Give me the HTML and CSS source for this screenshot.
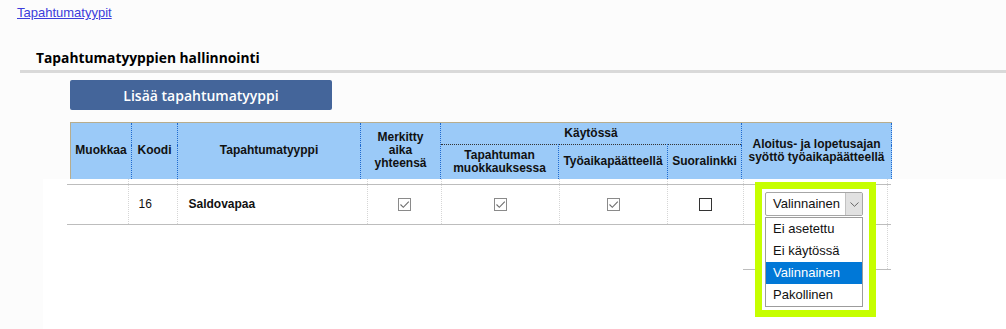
FILE: index.html
```html
<!DOCTYPE html>
<html lang="fi">
<head>
<meta charset="utf-8">
<title>Tapahtumatyypit</title>
<link rel="stylesheet" href="styles.css">
</head>
<body>
<div class="crumb"><a href="#">Tapahtumatyypit</a></div>
<h1 class="title">Tapahtumatyyppien hallinnointi</h1>
<div class="rule"></div>
<div class="toolbar"><button class="add" type="button">Lisää tapahtumatyyppi</button></div>

<table class="head">
  <colgroup>
    <col class="h1"><col class="h2"><col class="h3"><col class="h4"><col class="h5"><col class="h6"><col class="h7"><col class="h8">
  </colgroup>
  <tr class="r1">
    <th rowspan="2">Muokkaa</th>
    <th rowspan="2">Koodi</th>
    <th rowspan="2">Tapahtumatyyppi</th>
    <th rowspan="2">Merkitty<br>aika<br>yhteensä</th>
    <th colspan="3">Käytössä</th>
    <th rowspan="2">Aloitus- ja lopetusajan<br>syöttö työaikapäätteellä</th>
  </tr>
  <tr class="r2">
    <th class="sub">Tapahtuman<br>muokkauksessa</th>
    <th class="sub">Työaikapäätteellä</th>
    <th class="sub">Suoralinkki</th>
  </tr>
</table>

<div class="panel">
<table class="body">
  <colgroup>
    <col class="b1"><col class="b2"><col class="b3"><col class="b4"><col class="b5"><col class="b6"><col class="b7"><col class="b8"><col class="b9">
  </colgroup>
  <tr class="gap">
    <td></td><td></td><td></td><td></td><td></td><td></td><td></td><td></td><td class="end"></td>
  </tr>
  <tr class="row">
    <td></td>
    <td class="code">16</td>
    <td class="name">Saldovapaa</td>
    <td class="mid"><span class="cb on"><svg viewBox="0 0 11 11" width="11" height="11"><path d="M1.5 5.5 L4.3 8.3 L9.8 2.6" fill="none" stroke="#6d6d6d" stroke-width="1.1"/></svg></span></td>
    <td class="mid"><span class="cb on"><svg viewBox="0 0 11 11" width="11" height="11"><path d="M1.5 5.5 L4.3 8.3 L9.8 2.6" fill="none" stroke="#6d6d6d" stroke-width="1.1"/></svg></span></td>
    <td class="mid"><span class="cb on"><svg viewBox="0 0 11 11" width="11" height="11"><path d="M1.5 5.5 L4.3 8.3 L9.8 2.6" fill="none" stroke="#6d6d6d" stroke-width="1.1"/></svg></span></td>
    <td class="mid"><span class="cb"></span></td>
    <td class="mid"></td>
    <td class="end"></td>
  </tr>
  <tr class="after">
    <td></td><td></td><td></td><td></td><td></td><td></td><td></td><td class="last"></td><td class="end last"></td>
  </tr>
</table>
</div>

<div class="picker">
  <div class="select">
    <span class="value">Valinnainen</span>
    <span class="arrow"><svg viewBox="0 0 9 5" width="9" height="5"><path d="M0.5 0.5 L4.5 4.3 L8.5 0.5" fill="none" stroke="#666" stroke-width="1"/></svg></span>
  </div>
  <ul class="options">
    <li>Ei asetettu</li>
    <li>Ei käytössä</li>
    <li class="selected">Valinnainen</li>
    <li>Pakollinen</li>
  </ul>
</div>
</body>
</html>
```

FILE: styles.css
```css
html, body {
  margin: 0;
  padding: 0;
}
body {
  background: #fcfcfc;
  font-family: "Liberation Sans", Arial, sans-serif;
  color: #111;
  width: 1006px;
  height: 329px;
  overflow: hidden;
  position: relative;
}
.crumb {
  padding: 5px 0 0 17px;
  height: 17px;
  font-size: 13px;
  line-height: 16px;
}
.crumb a {
  color: #3d3ddb;
  text-decoration: underline;
}
.title {
  margin: 26px 0 0 36px;
  font-family: "Open Sans", sans-serif;
  font-size: 13.8px;
  font-weight: 700;
  line-height: 20px;
  height: 20px;
  color: #000;
}
.rule {
  margin: 2px 0 0 20px;
  height: 3px;
  background: #d9d9d9;
}
.toolbar {
  padding: 7px 0 0 70px;
}
.add {
  display: block;
  width: 262px;
  height: 30px;
  margin: 0;
  border: 0;
  border-radius: 2px;
  background: #44659a;
  color: #fff;
  font-family: "Open Sans", sans-serif;
  font-size: 14px;
  font-weight: 600;
  padding: 0;
}
.head {
  margin: 12px 0 0 70px;
  border-collapse: collapse;
  table-layout: fixed;
  width: 821px;
  border-top: 1px solid #b8ad8d;
  border-left: 1px solid #b8ad8d;
}
.h1 { width: 61px; }
.h2 { width: 46px; }
.h3 { width: 183px; }
.h4 { width: 80px; }
.h5 { width: 118px; }
.h6 { width: 109px; }
.h7 { width: 74px; }
.h8 { width: 150px; }
.head th {
  background: #9bcaf8;
  border-right: 1px dotted #1f6ad0;
  font-size: 12px;
  font-weight: 700;
  line-height: 13px;
  padding: 0 2px;
  color: #111;
  text-align: center;
  vertical-align: middle;
}
.head .r1 { height: 22px; }
.head .r2 { height: 34px; }
.head th.sub {
  border-top: 1px dotted #333;
}
.panel {
  background: #fff;
  margin-left: 43px;
  height: 160px;
}
.body {
  margin-left: 24px;
  border-collapse: collapse;
  table-layout: fixed;
  width: 824px;
  font-size: 12px;
}
.b1 { width: 61px; }
.b2 { width: 49px; }
.b3 { width: 190px; }
.b4 { width: 74px; }
.b5 { width: 118px; }
.b6 { width: 108px; }
.b7 { width: 76px; }
.b8 { width: 144px; }
.b9 { width: 4px; }
.body td {
  padding: 0;
  border-right: 1px dotted #d6d6d6;
}
.body td.end {
  border-right: 0;
}
.body .gap td {
  height: 5px;
}
.body .row td {
  height: 39px;
  border-top: 1px solid #bdbdbd;
  border-bottom: 1px solid #bdbdbd;
  vertical-align: middle;
}
.body .after td {
  height: 44px;
  border-right: 0;
}
.body .after td.last {
  border-bottom: 1px solid #bdbdbd;
}
.body .after td.last:not(.end) {
  border-right: 1px dotted #d6d6d6;
}
.body .code {
  padding-left: 10px;
}
.body .name {
  padding-left: 11px;
  font-weight: 700;
}
.body .mid {
  text-align: center;
}
.cb {
  display: inline-block;
  width: 11px;
  height: 11px;
  border: 1px solid #333;
  vertical-align: middle;
  background: #fff;
}
.cb.on {
  border-color: #8a8a8a;
}
.cb svg {
  display: block;
}
.picker {
  position: absolute;
  left: 755px;
  top: 182px;
  width: 121px;
  height: 135px;
  box-sizing: border-box;
  border: 7px solid #c6ff00;
  background: #fff;
  padding: 3px 0 0 3px;
  font-size: 13px;
}
.select {
  display: flex;
  align-items: stretch;
  width: 98px;
  height: 24px;
  box-sizing: border-box;
  border: 1px solid #a6a6a6;
  border-radius: 2px;
  background: #fff;
}
.select .value {
  flex: 1;
  padding-left: 7px;
  line-height: 22px;
  color: #111;
}
.select .arrow {
  width: 16px;
  background: #e1e1e1;
  border-left: 1px solid #c2c2c2;
  display: flex;
  align-items: center;
  justify-content: center;
}
.options {
  list-style: none;
  margin: 1px 0 0;
  padding: 0;
  width: 98px;
  box-sizing: border-box;
  border: 1px solid #9c9c9c;
  background: #fff;
}
.options li {
  height: 22px;
  line-height: 22px;
  padding-left: 7px;
  color: #111;
}
.options li.selected {
  background: #0078d7;
  color: #fff;
}
```
